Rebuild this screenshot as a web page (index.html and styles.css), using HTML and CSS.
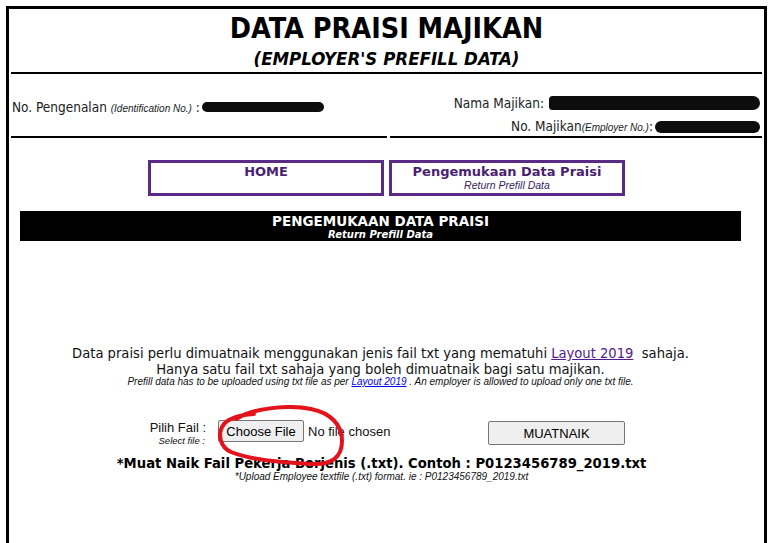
FILE: index.html
```html
<!DOCTYPE html>
<html lang="ms">
<head>
<meta charset="utf-8">
<title>Data Praisi Majikan</title>
<link rel="stylesheet" href="styles.css">
</head>
<body>
<div class="frame">
  <header class="head">
    <h1 class="title">DATA PRAISI MAJIKAN</h1>
    <h2 class="subtitle">(EMPLOYER'S PREFILL DATA)</h2>
  </header>

  <div class="info">
    <div class="info-cell info-left">
      <span>No. Pengenalan <i class="tiny">(Identification No.)</i> :</span><span class="blot blot-id"></span>
    </div>
    <div class="info-cell info-right">
      <div class="info-line"><span>Nama Majikan:</span><span class="blot blot-name"></span></div>
      <div class="info-line"><span>No. Majikan<i class="tiny">(Employer No.)</i>:</span><span class="blot blot-emp"></span></div>
    </div>
  </div>

  <nav class="nav">
    <a class="nav-box" href="#">HOME</a>
    <a class="nav-box" href="#">Pengemukaan Data Praisi<span class="nav-sub">Return Prefill Data</span></a>
  </nav>

  <div class="bar">
    <div class="bar-title">PENGEMUKAAN DATA PRAISI</div>
    <div class="bar-sub">Return Prefill Data</div>
  </div>

  <section class="notice">
    <p class="notice-main">Data praisi perlu dimuatnaik menggunakan jenis fail txt yang mematuhi <a class="link" href="#">Layout 2019</a>&nbsp; sahaja.<br>Hanya satu fail txt sahaja yang boleh dimuatnaik bagi satu majikan.</p>
    <p class="notice-en">Prefill data has to be uploaded using txt file as per <a class="link-en" href="#">Layout 2019</a> . An employer is allowed to upload only one txt file.</p>
  </section>

  <form class="upload">
    <div class="upload-label">
      <span class="lbl-ms">Pilih Fail :</span>
      <span class="lbl-en">Select file :</span>
    </div>
    <div class="upload-file">
      <button type="button" class="choose">Choose File</button><span class="nofile">No file chosen</span>
      <svg class="scribble" viewBox="0 0 130 62" width="130" height="62" aria-hidden="true">
        <path d="M20 14 C 35 4, 70 -1, 95 4 C 115 8, 126 20, 126 36 C 126 52, 116 60, 96 59 C 70 58, 35 55, 15 47 C 4 42, 2 30, 6 22 C 10 14, 22 10, 38 9" fill="none" stroke="#e3121b" stroke-width="4" stroke-linecap="round"/>
      </svg>
    </div>
    <button type="button" class="submit">MUATNAIK</button>
  </form>

  <div class="example">
    <p class="example-ms">*Muat Naik Fail Pekerja Berjenis (.txt). Contoh : P0123456789_2019.txt</p>
    <p class="example-en">*Upload Employee textfile (.txt) format. ie : P0123456789_2019.txt</p>
  </div>
</div>
</body>
</html>
```

FILE: styles.css
```css
html, body {
  margin: 0;
  padding: 0;
  background: #fff;
}

body {
  font-family: "DejaVu Sans Condensed", "DejaVu Sans", sans-serif;
  color: #111;
}

.frame {
  margin: 6px 4px 0 6px;
  border: 3px solid #000;
  border-bottom: none;
  height: 540px;
  box-sizing: border-box;
  padding: 0 2px;
}

.head {
  border-bottom: 2px solid #000;
  text-align: center;
  padding-top: 4px;
  height: 59px;
}

.title {
  margin: 0;
  font-size: 28.5px;
  line-height: 32px;
  font-weight: bold;
  color: #000;
}

.subtitle {
  margin: 3px 0 0;
  font-size: 18.5px;
  line-height: 22px;
  font-weight: bold;
  font-style: italic;
  color: #000;
}

.info {
  display: flex;
  gap: 3px;
  height: 64px;
}

.info-cell {
  border-bottom: 2px solid #000;
  font-size: 13.5px;
  color: #222;
}

.info-left {
  flex: 0 0 375px;
  display: flex;
  align-items: center;
  padding-left: 1px;
  padding-top: 3px;
}

.info-right {
  flex: 1;
  display: flex;
  flex-direction: column;
  align-items: flex-end;
  padding-top: 21px;
  padding-right: 2px;
  gap: 7px;
}

.info-line {
  display: flex;
  align-items: center;
  line-height: 16px;
}

.tiny {
  font-family: "Liberation Sans", Arial, sans-serif;
  font-size: 10px;
  font-style: italic;
}

.blot {
  display: inline-block;
  background: #0d0d0d;
  border-radius: 6px;
}

.blot-id {
  width: 122px;
  height: 10px;
  margin-left: 2px;
}

.blot-name {
  width: 211px;
  height: 14px;
  margin-left: 5px;
  border-radius: 4px 8px 8px 4px;
}

.blot-emp {
  width: 105px;
  height: 12px;
  margin-left: 2px;
}

.nav {
  display: flex;
  justify-content: center;
  gap: 5px;
  margin-top: 22px;
}

.nav-box {
  width: 236px;
  height: 36px;
  box-sizing: border-box;
  border: 3px solid #5a2b86;
  text-align: center;
  color: #4b1f72;
  font-family: "DejaVu Sans", sans-serif;
  font-weight: bold;
  font-size: 13px;
  line-height: 16px;
  text-decoration: none;
  padding-top: 1px;
  display: flex;
  flex-direction: column;
  align-items: center;
}

.nav-sub {
  font-family: "Liberation Sans", Arial, sans-serif;
  font-weight: normal;
  font-style: italic;
  font-size: 10.5px;
  line-height: 11px;
  color: #3a1a5c;
}

.bar {
  background: #000;
  color: #fff;
  text-align: center;
  margin: 15px 21px 0 9px;
  height: 30px;
  box-sizing: border-box;
  padding-top: 2px;
  font-family: "DejaVu Sans", sans-serif;
  font-weight: bold;
}

.bar-title {
  font-size: 13.5px;
  line-height: 16px;
}

.bar-sub {
  font-size: 10px;
  font-style: italic;
  line-height: 11px;
}

.notice {
  margin-top: 104px;
  text-align: center;
  padding-right: 12px;
}

.notice-main {
  margin: 0;
  font-size: 14.6px;
  line-height: 16px;
  color: #111;
}

.link {
  color: #551a8b;
}

.notice-en {
  margin: 0;
  font-family: "Liberation Sans", Arial, sans-serif;
  font-style: italic;
  font-size: 10px;
  line-height: 10px;
}

.link-en {
  color: #0000ee;
}

.upload {
  display: flex;
  align-items: flex-start;
  margin-top: 33px;
}

.upload-label {
  flex: 0 0 197px;
  display: flex;
  flex-direction: column;
  align-items: flex-end;
  padding-top: 1px;
  font-family: "Liberation Sans", Arial, sans-serif;
}

.lbl-ms {
  font-size: 13px;
  line-height: 14px;
  padding-right: 2px;
}

.lbl-en {
  font-size: 9.5px;
  font-style: italic;
  line-height: 12px;
  padding-right: 3px;
}

.upload-file {
  position: relative;
  flex: 0 0 270px;
  margin-left: 10px;
  display: flex;
  align-items: center;
  font-family: "Liberation Sans", Arial, sans-serif;
  font-size: 13px;
}

.choose {
  font-family: "Liberation Sans", Arial, sans-serif;
  font-size: 13px;
  height: 22px;
  width: 86px;
  padding: 0;
  background: #efefef;
  border: 1px solid #767676;
  border-radius: 2px;
  color: #000;
}

.nofile {
  margin-left: 4px;
}

.scribble {
  position: absolute;
  left: -2px;
  top: -15px;
}

.submit {
  width: 137px;
  height: 24px;
  margin-top: 1px;
  background: #efefef;
  border: 1px solid #767676;
  border-radius: 2px;
  font-family: "Liberation Sans", Arial, sans-serif;
  font-size: 13px;
  color: #000;
  padding: 0;
}

.example {
  text-align: center;
  margin-top: 9px;
  padding-right: 10px;
}

.example-ms {
  margin: 0;
  font-family: "DejaVu Sans", sans-serif;
  font-weight: bold;
  font-size: 13.2px;
  line-height: 16px;
  color: #000;
}

.example-en {
  margin: 0;
  font-family: "Liberation Sans", Arial, sans-serif;
  font-style: italic;
  font-size: 10px;
  line-height: 10px;
}
```
